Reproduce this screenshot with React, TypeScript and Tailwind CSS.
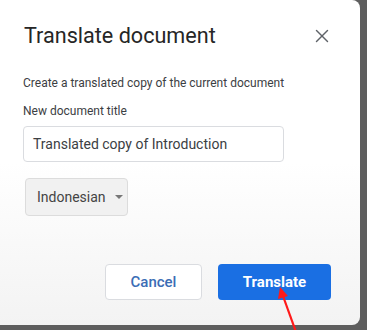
import { X } from 'lucide-react';

export default function App() {
  return (
    <div
      className="relative h-[330px] w-[367px] overflow-hidden bg-[#5e5e5e]"
      style={{ fontFamily: 'Roboto, "Liberation Sans", sans-serif' }}
    >
      <div className="flex h-[325px] w-[360px] flex-col rounded-r-lg bg-gradient-to-b from-white via-white to-[#f3f3f3] pl-[23px] pr-[27px]">
        <div className="mt-[22px] flex items-center justify-between">
          <h1 className="ml-[1px] text-[21.6px] leading-[28px] text-[#262626]">Translate document</h1>
          <X className="h-[22px] w-[22px] text-[#5f6368]" strokeWidth={1.6} />
        </div>

        <p className="mt-[26px] text-[12px] leading-[14px] text-[#3c4043]">Create a translated copy of the current document</p>
        <p className="mt-[14px] text-[12px] leading-[14px] text-[#3c4043]">New document title</p>

        <div className="mt-[8px] flex h-[36px] w-[261px] items-center rounded-[4px] border border-[#dadce0] bg-white px-[9px]">
          <span className="text-[14px] text-[#3c4043]">Translated copy of Introduction</span>
        </div>

        <div className="ml-[2px] mt-[16px] flex h-[38px] w-[103px] items-center gap-[9px] rounded-[4px] border border-[#dcdcdc] bg-[#f1f1f1] pl-[11px]">
          <span className="text-[14px] text-[#444]">Indonesian</span>
          <span className="h-0 w-0 border-x-[4px] border-t-[4px] border-x-transparent border-t-[#777]" />
        </div>

        <div className="mt-[48px] flex gap-[16px] self-end pr-[2px]">
          <button className="h-[36px] w-[97px] rounded-[4px] border border-[#dadce0] bg-white text-[15px] font-medium text-[#3b6db5]">
            Cancel
          </button>
          <button className="h-[36px] w-[113px] rounded-[4px] bg-[#1a6fe3] text-[15px] font-bold text-white">
            Translate
          </button>
        </div>
      </div>

      <svg className="absolute left-0 top-0" width="367" height="330" viewBox="0 0 367 330">
        <line x1="296" y1="332" x2="283" y2="296" stroke="#ff1a1a" strokeWidth="2.2" />
        <polygon points="280,287 278,299 288,296" fill="#ff1a1a" />
      </svg>
    </div>
  );
}
